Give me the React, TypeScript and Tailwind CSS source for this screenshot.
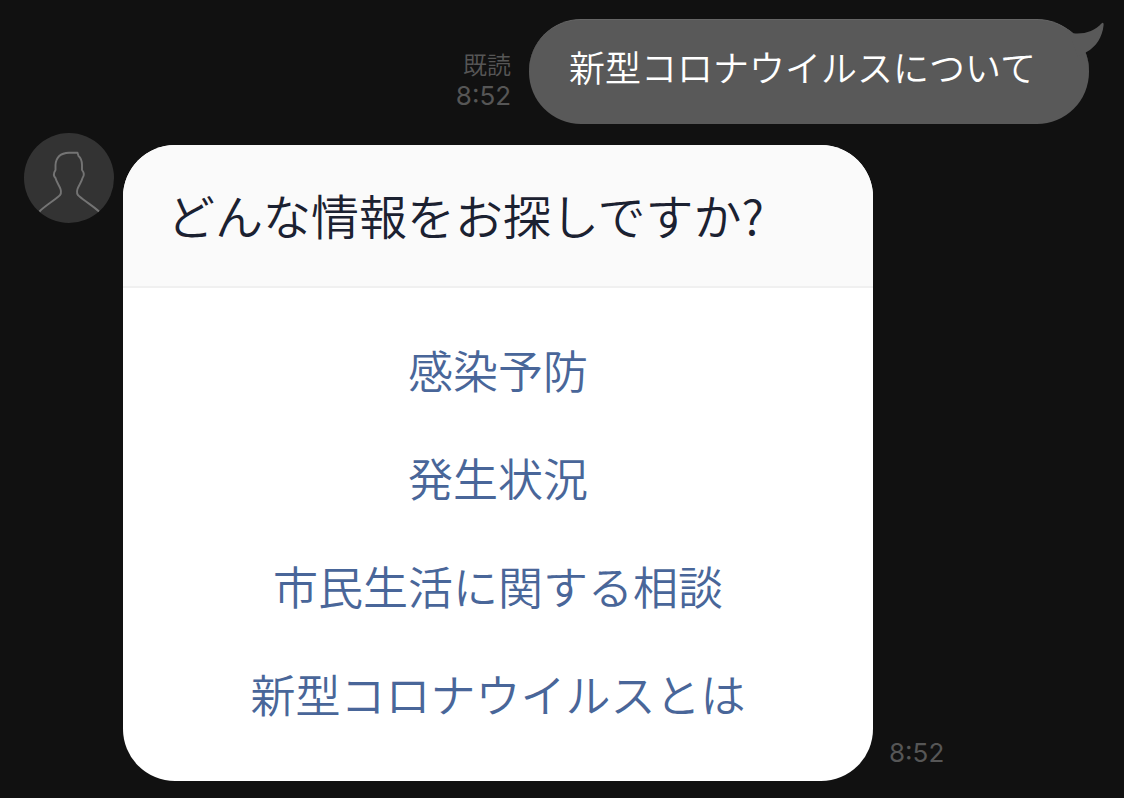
import React from 'react'

interface MessageTimeProps {
  time: string
  read?: boolean
}

const options = ['感染予防', '発生状況', '市民生活に関する相談', '新型コロナウイルスとは']

const MessageTime: React.FC<MessageTimeProps> = ({ time, read }) => (
  <div className="shrink-0 text-right text-2xl leading-8 text-[#565656]">
    {read && <p>既読</p>}
    <time className="block font-['Inter','Noto_Sans_CJK_JP',sans-serif] text-[26px] leading-8 font-normal">{time}</time>
  </div>
)

const Avatar: React.FC = () => (
  <svg viewBox="0 0 90 90" className="h-[90px] w-[90px] shrink-0" role="img" aria-label="アイコン">
    <circle cx="45" cy="45" r="45" fill="#333333" />
    <path
      d="M15.5 78.5 C21 73 28 69 34.5 63.5 C37.5 61.5 37.5 59 36.5 56 C35 52 32.5 49 31.5 45 C29.5 43 29.5 40 31.5 37 V32 C32 24 37 20 45 19.7 H53.5 L54.5 23 C57.5 25.5 58 28 58 32 V37 C60.5 40 60 43 58.5 45 C57.5 49 55 52 53.5 56 C52.5 59 52.5 61.5 55.5 63.5 C62 69 69 73 75 78.5"
      fill="none"
      stroke="#747474"
      strokeWidth="1.9"
      strokeLinejoin="round"
    />
  </svg>
)

const App: React.FC = () => {
  return (
    <main className="flex min-h-screen flex-col bg-[#111111] pt-[19px] pb-4 font-['Noto_Sans_CJK_JP',sans-serif] font-[350]">
      {/* Sent message */}
      <div className="flex items-end justify-end gap-[18px] pr-[35px] pl-6">
        <div className="pb-3">
          <MessageTime time="8:52" read />
        </div>
        <div className="relative rounded-[52px] border-t border-[#666666] bg-[#595959] pt-[18px] pr-[53px] pb-[30px] pl-10">
          <p className="text-4xl leading-[56px] text-white">新型コロナウイルスについて</p>
          <svg viewBox="0 0 40 40" className="absolute -top-px -right-[15px] h-10 w-10" aria-hidden="true">
            <path
              d="M4 10 L9.5 14.3 C20 15.5 31 12 37.5 4.5 C38.7 3 39.8 4 39.6 6 C38.5 18 32 28 22.5 33 L14 38 Z"
              fill="#595959"
            />
          </svg>
        </div>
      </div>

      {/* Received message */}
      <div className="mt-[9px] flex items-start gap-[9px] px-6">
        <Avatar />
        <div className="mt-3 flex min-w-0 flex-1 items-end gap-4">
          <section className="max-w-[750px] flex-1 overflow-hidden rounded-[52px] bg-white">
            <h1 className="border-b-2 border-[#f0f0f0] bg-[#fafafa] px-11 pt-[34px] pb-9 text-[48px] leading-[71px] text-[#1b2131]">
              どんな情報をお探しですか?
            </h1>
            <ul className="pt-7 pb-[33px]">
              {options.map((label) => (
                <li key={label}>
                  <button
                    type="button"
                    className="w-full cursor-pointer px-6 py-5 text-center text-[45px] leading-[68px] text-[#496699]"
                  >
                    {label}
                  </button>
                </li>
              ))}
            </ul>
          </section>
          <div className="pb-3">
            <MessageTime time="8:52" />
          </div>
        </div>
      </div>
    </main>
  )
}

export default App
